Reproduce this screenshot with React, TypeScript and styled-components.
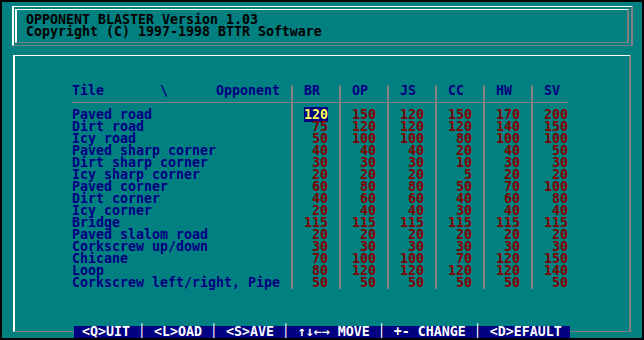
import React from 'react';
import styled, { createGlobalStyle } from 'styled-components';

const TEAL = '#008080';
const NAVY = '#000080';
const GRAY = '#808080';

const GlobalStyle = createGlobalStyle`
    body {
        margin:0;
        background:#000;
        font-family:"DejaVu Sans Mono", "Liberation Mono", monospace;
        font-weight:bold;
        font-size:13.29px;
        line-height:12px;
    }
`

const Screen = styled.div`
    margin:2px 0 0 2px;
    width:640px;
    height:336px;
    background:${TEAL};
    display:flex;
    flex-direction:column;
`

const TitleFrame = styled.div`
    box-sizing:border-box;
    margin:4px 0 0 10px;
    width:621px;
    height:40px;
    border-top:1px solid #fff;
    border-left:2px solid #fff;
    border-right:2px solid ${GRAY};
    border-bottom:1px solid ${GRAY};
`

const TitleInner = styled.div`
    box-sizing:border-box;
    margin:2px 0 0 1px;
    width:614px;
    height:34px;
    padding:4px 0 0 9px;
    border-top:1px solid #fff;
    border-left:2px solid #fff;
    border-right:2px solid ${GRAY};
    border-bottom:1px solid ${GRAY};
    color:#000;
`

const TitleLine = styled.div`
    height:12px;
    white-space:pre;
`

const PanelWrap = styled.div`
    margin:9px 0 0 11px;
    width:618px;
    flex:1;
    display:flex;
    flex-direction:column;
`

const Panel = styled.div`
    flex:1;
    border-top:1px solid #fff;
    border-left:2px solid #fff;
    border-right:2px solid ${GRAY};
    padding:29px 0 0 57px;
`

const Footer = styled.div`
    height:12px;
    display:flex;
`

const FooterEdge = styled.div<{ $side: 'left' | 'right' }>`
    box-sizing:border-box;
    width:61px;
    height:6px;
    border-bottom:1px solid ${GRAY};
    ${p => p.$side === 'left' ? 'border-left:2px solid #fff;' : `border-right:2px solid ${GRAY};`}
`

const StatusBar = styled.div`
    width:496px;
    height:12px;
    background:${NAVY};
    color:#fff;
    white-space:pre;
`

const Table = styled.div`
    display:grid;
    grid-template-columns:216px repeat(5, 8px 40px) 8px 32px;
    grid-auto-rows:12px;
`

const HeadLabel = styled.div`
    grid-row:1;
    grid-column:1;
    white-space:pre;
    color:${NAVY};
`

const HeadCell = styled.div<{ $col: number }>`
    grid-row:1;
    grid-column:${p => p.$col};
    padding-left:8px;
    color:${NAVY};
`

const RuleRow = styled.div`
    grid-row:2;
    grid-column:1 / -1;
    display:flex;
    align-items:center;
    &::before {
        content:'';
        flex:1;
        height:1px;
        margin-top:-1px;
        background:${GRAY};
    }
`

const Divider = styled.div<{ $col: number }>`
    grid-row:1 / span 17;
    grid-column:${p => p.$col};
    display:flex;
    justify-content:center;
    &::before {
        content:'';
        width:2px;
        background:${GRAY};
    }
`

const Label = styled.div<{ $row: number }>`
    grid-row:${p => p.$row};
    grid-column:1;
    color:${NAVY};
    white-space:pre;
`

const Value = styled.div<{ $row: number; $col: number; $last?: boolean }>`
    grid-row:${p => p.$row};
    grid-column:${p => p.$col};
    text-align:right;
    padding-right:${p => p.$last ? 0 : 8}px;
    color:#800000;
`

const Selected = styled.span`
    background:${NAVY};
    color:#ffff55;
`

const opponents = ['BR', 'OP', 'JS', 'CC', 'HW', 'SV'];

const tiles: [string, number[]][] = [
    ['Paved road', [120, 150, 120, 150, 170, 200]],
    ['Dirt road', [75, 120, 120, 120, 140, 150]],
    ['Icy road', [50, 100, 100, 80, 100, 100]],
    ['Paved sharp corner', [40, 40, 40, 20, 40, 50]],
    ['Dirt sharp corner', [30, 30, 30, 10, 30, 30]],
    ['Icy sharp corner', [20, 20, 20, 5, 20, 20]],
    ['Paved corner', [60, 80, 80, 50, 70, 100]],
    ['Dirt corner', [40, 60, 60, 40, 60, 80]],
    ['Icy corner', [20, 40, 40, 30, 40, 40]],
    ['Bridge', [115, 115, 115, 115, 115, 115]],
    ['Paved slalom road', [20, 20, 20, 20, 20, 20]],
    ['Corkscrew up/down', [30, 30, 30, 30, 30, 30]],
    ['Chicane', [70, 100, 100, 70, 120, 150]],
    ['Loop', [80, 120, 120, 120, 120, 140]],
    ['Corkscrew left/right, Pipe', [50, 50, 50, 50, 50, 50]],
];

const App = () => {
    const selRow = 0, selCol = 0;

    return (
        <>
            <GlobalStyle />
            <Screen>
                <TitleFrame>
                    <TitleInner>
                        <TitleLine>OPPONENT BLASTER Version 1.03</TitleLine>
                        <TitleLine>Copyright (C) 1997-1998 BTTR Software</TitleLine>
                    </TitleInner>
                </TitleFrame>
                <PanelWrap>
                    <Panel>
                        <Table>
                            <HeadLabel>{'Tile       \\      Opponent'}</HeadLabel>
                            {opponents.map((o, i) => (
                                <HeadCell key={o} $col={3 + i * 2}>{o}</HeadCell>
                            ))}
                            <RuleRow />
                            {opponents.map((o, i) => (
                                <Divider key={'d' + o} $col={2 + i * 2} />
                            ))}
                            {tiles.map(([name, vals], r) => (
                                <React.Fragment key={name}>
                                    <Label $row={3 + r}>{name}</Label>
                                    {vals.map((v, c) => (
                                        <Value key={c} $row={3 + r} $col={3 + c * 2} $last={c === 5}>
                                            {r === selRow && c === selCol ? <Selected>{v}</Selected> : v}
                                        </Value>
                                    ))}
                                </React.Fragment>
                            ))}
                        </Table>
                    </Panel>
                    <Footer>
                        <FooterEdge $side="left" />
                        <StatusBar>{' <Q>UIT │ <L>OAD │ <S>AVE │ ↑↓←→ MOVE │ +- CHANGE │ <D>EFAULT '}</StatusBar>
                        <FooterEdge $side="right" />
                    </Footer>
                </PanelWrap>
            </Screen>
        </>
    )
}

export default App;
